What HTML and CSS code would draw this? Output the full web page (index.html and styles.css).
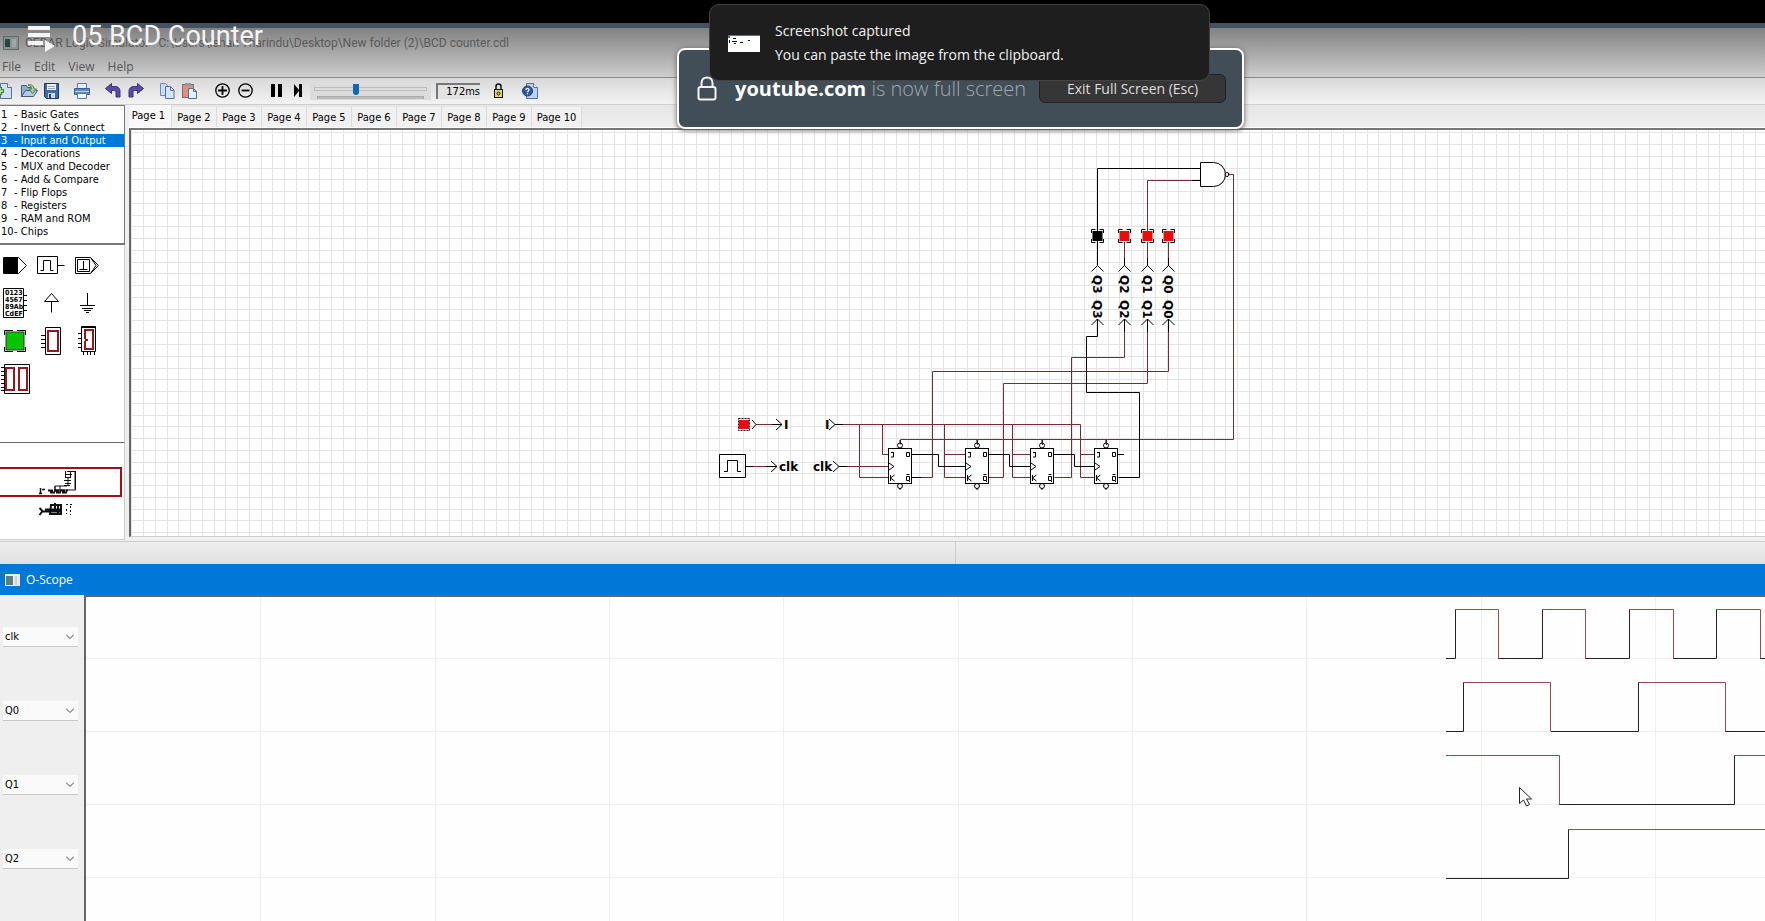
FILE: index.html
```html
<!DOCTYPE html>
<html lang="en">
<head>
<meta charset="utf-8">
<title>05 BCD Counter</title>
<link rel="stylesheet" href="styles.css">
</head>
<body>
<div class="letterbox"></div>
<div class="desktop-strip"></div>

<header class="chrome">
  <div class="title-row">
    <svg class="app-icon" width="16" height="14" viewBox="0 0 16 14"><rect x=".5" y=".5" width="15" height="13" fill="#8b9190" stroke="#646a69"/><rect x="2" y="3" width="5" height="8" fill="#25483f"/><rect x="9" y="3" width="4" height="8" fill="#a3a8a7"/></svg>
    <span>CEDAR Logic Simulator - C:\Users\Ishan Tharindu\Desktop\New folder (2)\BCD counter.cdl</span>
  </div>
  <nav class="menu-row">
    <button>File</button><button>Edit</button><button>View</button><button>Help</button>
  </nav>
</header>

<div class="toolbar">
  <button aria-label="New" class="tool t-new"><svg width="16" height="16" viewBox="0 0 16 16"><path d="M3.500.5h7l4 4v11h-11z" fill="#cfe0f4" stroke="#5b7193"/><path d="M10.500.5v4h4" fill="#fff" stroke="#5b7193"/><path d="M3 4v8M-1 8h8" stroke="#3e7c3a" stroke-width="4"/><path d="M3 5v6M0 8h6" stroke="#a9dc8e" stroke-width="2"/></svg></button>
  <button aria-label="Open" class="tool t-open"><svg width="17" height="16" viewBox="0 0 17 16"><path d="M.5 13.500v-11h5l1 2h5v3" fill="#8fb0cf" stroke="#3f5c86"/><path d="M.5 13.500l4-6h12l-4 6z" fill="#b6cbe4" stroke="#3f5c86"/><path d="M7 2c4-1 6 1 6 4h2.500l-4 4.500L8 6h2.500c0-2-1-3-3.500-4z" fill="#a9cf8b" stroke="#4f7c4c"/></svg></button>
  <button aria-label="Save" class="tool t-save"><svg width="15" height="16" viewBox="0 0 15 16"><path d="M.5.5h14v15h-12l-2-2z" fill="#4068ad" stroke="#1f3766"/><rect x="3" y="1" width="9" height="6" fill="#eef3f9"/><path d="M4 3.500h7M4 5.500h7" stroke="#9ab"/><rect x="4" y="10" width="7" height="5" fill="#cfd8e6"/><rect x="5" y="11" width="2" height="4" fill="#263e6e"/></svg></button>
  <button aria-label="Print" class="tool t-print"><svg width="16" height="16" viewBox="0 0 16 16"><path d="M3.500.5h9v5h-9z" fill="#e6eef8" stroke="#5a78a8"/><path d="M.5 5.500h15v6h-15z" fill="#5f86bf" stroke="#3c5d94"/><path d="M1 8.500h14" stroke="#c3d6ee"/><path d="M3.500 10.500h9v5h-9z" fill="#f2f6fb" stroke="#5a78a8"/></svg></button>
  <button aria-label="Undo" class="tool t-undo"><svg width="16" height="15" viewBox="0 0 16 15"><path d="M.5 5.500L6.500.5v3h3c4 0 5.500 2 5.500 5v5.500h-4V9.500c0-1.500-1-2-2.500-2h-2v3z" fill="#5b4aa8" stroke="#3b2f77"/></svg></button>
  <button aria-label="Redo" class="tool t-redo"><svg width="16" height="15" viewBox="0 0 16 15"><path d="M15.500 5.500L9.500.5v3h-3C2.500 3.500 1 5.500 1 8.500V14h4V9.500c0-1.500 1-2 2.500-2h2v3z" fill="#5b4aa8" stroke="#3b2f77"/></svg></button>
  <button aria-label="Copy" class="tool t-copy"><svg width="15" height="16" viewBox="0 0 15 16"><path d="M.5.500h5l3 3v9h-8z" fill="#c9dcf4" stroke="#7189b3"/><path d="M5.500 3.500h5l3.500 3.500v8.500H5.500z" fill="#d6e6fa" stroke="#566f9f"/><path d="M10.500 3.500v4H14" fill="none" stroke="#566f9f"/></svg></button>
  <button aria-label="Paste" class="tool t-paste"><svg width="16" height="16" viewBox="0 0 16 16"><rect x=".5" y="1.500" width="11" height="13" fill="#dd8f86" stroke="#8a6a66"/><rect x="3" y="0" width="6" height="3" fill="#999"/><path d="M6.500 5.500h5l3 3v7h-8z" fill="#e3eefc" stroke="#566f85"/><path d="M11.500 5.500v3h3" fill="none" stroke="#566f85"/></svg></button>
  <button aria-label="Zoom in" class="tool t-in"><svg width="15" height="15" viewBox="0 0 15 15" fill="none" stroke="#000"><circle cx="7.500" cy="7.500" r="6.700" stroke-width="1.300"/><path d="M7.500 3v9M3 7.500h9" stroke-width="1.800"/></svg></button>
  <button aria-label="Zoom out" class="tool t-out"><svg width="15" height="15" viewBox="0 0 15 15" fill="none" stroke="#000"><circle cx="7.500" cy="7.500" r="6.700" stroke-width="1.300"/><path d="M3.500 7.500h8" stroke-width="1.800"/></svg></button>
  <button aria-label="Pause" class="tool t-pause"><svg width="11" height="13" viewBox="0 0 11 13"><path d="M0 0h4v13H0zM7 0h4v13H7z"/></svg></button>
  <button aria-label="Step" class="tool t-step"><svg width="8" height="13" viewBox="0 0 8 13"><path d="M0 0l5 6V0h3v13H5V7l-5 6z"/></svg></button>
  <div class="speed">
    <input type="range" min="0" max="100" value="36" aria-label="Simulation speed">
    <div class="speed-base"></div>
  </div>
  <input class="readout" type="text" value="172ms" readonly aria-label="Step time">
  <button aria-label="Lock" class="tool t-lock"><svg width="9" height="15" viewBox="0 0 9 15"><path d="M2 7V3.500C2 .2 7 .2 7 3.500V7" fill="none" stroke="#111" stroke-width="1.500"/><rect x=".5" y="6.500" width="8" height="8" fill="#e2d96a" stroke="#111"/><circle cx="4.500" cy="10.500" r="1.500" fill="none" stroke="#111"/></svg></button>
  <button aria-label="Help topics" class="tool t-help"><svg width="16" height="16" viewBox="0 0 16 16"><path d="M4.500.5h7l4 4v11h-11z" fill="#bdd2ee" stroke="#5b7193"/><path d="M11.500.5v4h4" fill="#fff" stroke="#5b7193"/><circle cx="5.500" cy="8" r="5" fill="#2f57a3" stroke="#1f3b78"/><path d="M4 7c0-2.200 3.300-2 3 0-.2 1-1.500 1-1.500 2.300M5.500 10.200v1.300" fill="none" stroke="#fff" stroke-width="1.200"/></svg></button>
</div>

<main class="workspace">
  <aside class="side">
    <ul class="library" role="listbox" aria-label="Gate library">
      <li role="option"><b>1</b>- Basic Gates</li>
      <li role="option"><b>2</b>- Invert &amp; Connect</li>
      <li role="option" aria-selected="true" class="selected"><b>3</b>- Input and Output</li>
      <li role="option"><b>4</b>- Decorations</li>
      <li role="option"><b>5</b>- MUX and Decoder</li>
      <li role="option"><b>6</b>- Add &amp; Compare</li>
      <li role="option"><b>7</b>- Flip Flops</li>
      <li role="option"><b>8</b>- Registers</li>
      <li role="option"><b>9</b>- RAM and ROM</li>
      <li role="option"><b>10</b>- Chips</li>
    </ul>
    <div class="palette">
      <button aria-label="Toggle switch"><svg width="36" height="38"><path d="M3.500 11.500h15l8 8-8 8h-15z" fill="#fff" stroke="#000"/><path d="M4 12h14v15H4z"/></svg></button>
      <button aria-label="Clock"><svg width="36" height="38" fill="none" stroke="#000"><path d="M.5 10.500h20v17H.5zM20.500 19.500h7M3.500 24.500h3v-10h7v10h3"/></svg></button>
      <button aria-label="Pulse"><svg width="36" height="38" fill="none" stroke="#000"><path d="M1.500 11.500h15l8 8-8 8h-15zM3.500 13.500h12v12h-12zM16.500 11.500l5.500 8-5.500 8M9.500 15v8.500M5.500 23.500h8"/></svg></button>
      <button aria-label="Keypad"><svg width="36" height="38"><path d="M3.500 4.500h20v29h-20zM24 11.500h3M24 16.500h3M24 21.500h3M24 26.500h3" fill="none" stroke="#000"/><g class="keypad"><text x="5" y="11">0123</text><text x="5" y="18">4567</text><text x="5" y="25">89Ab</text><text x="5" y="32">CdEF</text></g></svg></button>
      <button aria-label="Power"><svg width="36" height="38" fill="none" stroke="#000"><path d="M14.500 28.500v-11M7.500 17.500l7-8 7 8z"/></svg></button>
      <button aria-label="Ground"><svg width="36" height="38" fill="none" stroke="#000"><path d="M13.500 9v12M6 21.500h15M8 24.500h11M10 26.500h7M12 28.500h3"/></svg></button>
      <button aria-label="LED"><svg width="36" height="38"><rect x="6" y="10" width="18" height="18" fill="#06c400" stroke="#333"/><path d="M4.500 13V8.500H13M17 8.500h8.500V13M4.500 25v4.500H13M17 29.500h8.500V25" fill="none" stroke="#000"/></svg></button>
      <button aria-label="Seven segment display"><svg width="36" height="38" fill="none"><path d="M8.500 5.500h15v27h-15zM4 13.500h4M4 17.500h4M4 21.500h4M4 25.500h4" stroke="#000"/><rect x="11" y="9" width="10" height="20" stroke="#98161c" stroke-width="2"/></svg></button>
      <button aria-label="BCD display"><svg width="36" height="38" fill="none"><path d="M7.500 4.500h14v25h-14zM4 11.500h3M4 16.500h3M4 21.500h3M4 25.500h3M9.500 30v3M13.500 30v3M16.500 30v3M20.500 30v3M7 5.500h15" stroke="#000"/><path d="M11 17V8h8v19h-8v-8M11 18h3" stroke="#98161c" stroke-width="2"/></svg></button>
      <button aria-label="Two digit display"><svg width="36" height="38" fill="none"><path d="M4.500 4.500h25v29h-25zM1 7.500h3M1 11.500h3M1 15.500h3M1 19.500h3M1 23.500h3M1 27.500h3M1 30.500h3" stroke="#000"/><path d="M6 8h8v22H6zM19 8h8v22h-8z" stroke="#98161c" stroke-width="2"/></svg></button>
    </div>
    <div class="minimap">
      <svg width="124" height="96">
        <path d="M-2 25h123v28H-2" fill="none" stroke="#a30f14" stroke-width="2"/>
        <g fill="none" stroke="#111"><path d="M65.500 28v7M67 28.500h8v18M70.500 29v6M75.500 28v19H55v-4h12M64 37.500h7M65 40.500h6M68 34v8M55 43v6M60 43v6M65 31.500h7M65 34.500h6M64 42.500h6"/><path d="M48 47.500h20M50 49.500h17" stroke-width="2" stroke-dasharray="5 1"/><path d="M40.500 45v6M39 50.500h3M42 46.500h3" stroke-width="1.500"/></g>
        <g fill="none" stroke="#111"><path d="M39.500 65l3 3-3 4M42 68.500h20M45 66.500h15" stroke-width="2"/><path d="M51 62h10v9H50zM55 60v9M58 61v9" stroke-width="2"/><path d="M66 61.500h6M70.500 63v9M66.500 66v5" stroke-dasharray="2 2"/></g>
      </svg>
    </div>
  </aside>

  <section class="document">
    <div class="tabs" role="tablist">
      <button role="tab" aria-selected="true" class="tab active">Page 1</button>
      <button role="tab" class="tab">Page 2</button>
      <button role="tab" class="tab">Page 3</button>
      <button role="tab" class="tab">Page 4</button>
      <button role="tab" class="tab">Page 5</button>
      <button role="tab" class="tab">Page 6</button>
      <button role="tab" class="tab">Page 7</button>
      <button role="tab" class="tab">Page 8</button>
      <button role="tab" class="tab">Page 9</button>
      <button role="tab" class="tab last">Page 10</button>
    </div>
    <div class="canvas">
      <svg width="100%" height="100%">
        <defs>
          <pattern id="grid" patternUnits="userSpaceOnUse" x="12" y="14" width="200" height="200">
            <path shape-rendering="crispEdges" stroke="#e4e4e7" d="M.5 0v200M12.500 0v200M24.500 0v200M35.500 0v200M47.500 0v200M59.500 0v200M71.500 0v200M82.500 0v200M94.500 0v200M106.500 0v200M118.500 0v200M129.500 0v200M141.500 0v200M153.500 0v200M165.500 0v200M176.500 0v200M188.500 0v200M0 .5h200M0 12.500h200M0 24.500h200M0 35.500h200M0 47.500h200M0 59.500h200M0 71.500h200M0 82.500h200M0 94.500h200M0 106.500h200M0 118.500h200M0 129.500h200M0 141.500h200M0 153.500h200M0 165.500h200M0 176.500h200M0 188.500h200"/>
          </pattern>
          <g id="flipflop" fill="none" stroke="#000">
            <rect x=".5" y=".5" width="23" height="35" fill="#fff"/>
            <circle cx="12" cy="-2.500" r="2.500"/><circle cx="12" cy="38" r="2.500"/><path d="M12-5v-3M12 40v2M1 15l5 3.500-5 3.500"/>
            <path d="M3 4.500h3M5.500 4v5H3M2.500 27v6M6.500 27l-4 3 4 3M18.500 4.500h3v4h-3zM18.500 28.500h3v4h-3zM18.500 26.500h3M21 33l1 1"/>
          </g>
          <g id="led"><rect x="-4.500" y="-5" width="10" height="10"/><path d="M-5.500-3v-3.500h4M2.500-6.500h4V-3M-5.500 3v3.500h4M2.500 6.500h4V3" fill="none" stroke="#000"/></g>
        </defs>
        <rect width="100%" height="100%" fill="url(#grid)"/>
        <g transform="translate(-131 -130)" fill="none" stroke-width="1">
          <g class="wire-on">
            <path d="M1147.500 236v-55.500H1200M1228 174.500h5.500v265H900.500v5M977.500 445v-5M1042.500 445v-5M1106.500 445v-5"/>
            <path d="M1124.500 242v20M1147.500 242v20M1168.500 242v20"/>
            <path d="M1124.500 325v32.500h-53v120h-17M1147.500 325v58.500h-144v94h-15M1168.500 325v46.500h-236v106h-20"/>
            <path d="M756 424.500h20M842 424.500h238.500v53h14M859.500 424.500v53H888M882.500 424.500v30h6M944.500 424.500v53H965M944.500 454.500H965M1012.500 424.500v53h18M1012.500 454.500h18M1080.500 454.500h14M752 466.500h16M845 466.500h43"/>
          </g>
          <g class="wire-off">
            <path d="M1200 168.500H1097.500V265M1097.500 319v17.500h-11v56h53v85h-21M1118 454.500h6"/>
            <path d="M912 454.500h26.500v12H965M988 454.500h21.500v12h21M1053 454.500h21.500v12h20"/>
            <path d="M1192 180.500h8M745 466.500h8M766 466.500h11M772 424.500h10M835 424.500h8M839 466.500h8M912 477.500h9"/>
            <path d="M1124.500 258v8M1147.500 258v8M1168.500 258v8M1124.500 319v13M1147.500 319v13M1168.500 319v13"/>
            <path d="M1091.500 271.500l6-6 6 6M1118.500 271.500l6-6 6 6M1141.500 271.500l6-6 6 6M1162.500 271.500l6-6 6 6M1091.500 325l6-6 6 6M1118.500 325l6-6 6 6M1141.500 325l6-6 6 6M1162.500 325l6-6 6 6"/>
            <path d="M776 419l6 5.500-6 5.500M829 419l6 5.500-6 5.500M771 461l6 5.500-6 5.500M833 461l6 5.500-6 5.500M752 420l4 4.500-4 4.500"/>
            <path d="M1200.500 162.500h13a12 12 0 0 1 0 24h-13z" fill="#fff"/><circle cx="1227" cy="174.500" r="2"/>
            <path d="M719.500 454.500h26v23h-26zM724 471.500h3.500v-11h10v11h3.500"/>
          </g>
          <use href="#led" x="1097" y="236" fill="#000"/><use href="#led" x="1124" y="236" fill="#e80c0c"/><use href="#led" x="1147" y="236" fill="#e80c0c"/><use href="#led" x="1168" y="236" fill="#e80c0c"/>
          <rect x="739" y="420" width="10" height="9" fill="#e80c0c"/><rect x="738.500" y="418.500" width="11" height="12" stroke="#000" stroke-dasharray="2 1"/>
          <use href="#flipflop" x="888" y="448"/><use href="#flipflop" x="965" y="448"/><use href="#flipflop" x="1030" y="448"/><use href="#flipflop" x="1094" y="448"/>
          <g class="net">
            <text x="784" y="429">I</text><text x="825" y="429">I</text><text x="779" y="471">clk</text><text x="813" y="471">clk</text>
            <text transform="translate(1093 275) rotate(90)">Q3</text><text transform="translate(1120 275) rotate(90)">Q2</text><text transform="translate(1143 275) rotate(90)">Q1</text><text transform="translate(1164 275) rotate(90)">Q0</text>
            <text transform="translate(1093 300) rotate(90)">Q3</text><text transform="translate(1120 300) rotate(90)">Q2</text><text transform="translate(1143 300) rotate(90)">Q1</text><text transform="translate(1164 300) rotate(90)">Q0</text>
          </g>
        </g>
      </svg>
    </div>
  </section>
</main>

<footer class="status"><span></span><span></span></footer>

<section class="scope">
  <h2 class="scope-title"><svg width="15" height="12" viewBox="0 0 15 12"><path d="M0 0h15v12H0z" fill="#e8edf0"/><path d="M1 2h7v9H1z" fill="#5d7f7b"/><path d="M10 2h2v9h-2z" fill="#c7d3da"/></svg>O-Scope</h2>
  <div class="scope-body">
    <div class="channels">
      <label class="channel"><select aria-label="Channel 1"><option>clk</option></select><svg width="8" height="5"><path d="M0 .5l4 4 4-4" fill="none" stroke="#444"/></svg></label>
      <label class="channel"><select aria-label="Channel 2"><option>Q0</option></select><svg width="8" height="5"><path d="M0 .5l4 4 4-4" fill="none" stroke="#444"/></svg></label>
      <label class="channel"><select aria-label="Channel 3"><option>Q1</option></select><svg width="8" height="5"><path d="M0 .5l4 4 4-4" fill="none" stroke="#444"/></svg></label>
      <label class="channel"><select aria-label="Channel 4"><option>Q2</option></select><svg width="8" height="5"><path d="M0 .5l4 4 4-4" fill="none" stroke="#444"/></svg></label>
    </div>
    <div class="traces">
      <svg width="100%" height="100%">
        <g transform="translate(-86 -598)" fill="none">
          <path stroke="#efefef" d="M260.500 598v400M435.500 598v400M609.500 598v400M783.500 598v400M958.500 598v400M1132.500 598v400M1306.500 598v400M1481.500 598v400M1655.500 598v400M86 659.500h1800M86 732.500h1800M86 805.500h1800M86 878.500h1800"/>
          <g class="trace-low">
            <path d="M1446 659.500h9.500v-49M1498 659.500h44.500v-49M1585 659.500h44.500v-49M1673 659.500h43.500v-49M1760 659.500h40"/>
            <path d="M1446 732.500h17.500v-49M1551 732.500h87.500v-49M1725 732.500h80M1559 805.500h175.500v-49M1446 879.500h122.500v-49"/>
          </g>
          <g class="trace-high">
            <path d="M1455 610.500h43.500v49M1542 610.500h43.500v49M1629 610.500h44.500v49M1716 610.500h44.500v49"/>
            <path d="M1463 683.500h87.500v49M1638 683.500h87.500v49M1446 756.500h113.500v49M1734 756.500h80M1568 830.500h240"/>
          </g>
          <path d="M1519.500 788.500v16l4-3.500 3 6 3-1.500-3-5.500h5z" fill="#fff" stroke="#222"/>
        </g>
      </svg>
    </div>
  </div>
</section>

<div class="video-title">
  <svg width="28" height="28" viewBox="0 0 28 28" fill="#f5f5f5"><path d="M0 0h22v4H0zM0 7h22v4H0zM0 15h15v4H0zM17 14l10 6-10 6z"/></svg>
  <span>05 BCD Counter</span>
</div>

<div class="fullscreen-prompt">
  <svg width="20" height="25" viewBox="0 0 20 25" fill="none" stroke="#f4f4f4" stroke-width="2"><rect x="1.500" y="11" width="17" height="12.500" rx="2"/><path d="M4.500 11V7c0-7.500 11-7.500 11 0v4"/></svg>
  <p><strong>youtube.com</strong> is now full screen</p>
  <button>Exit Full Screen (Esc)</button>
</div>

<div class="toast" role="status">
  <svg width="32" height="17" viewBox="0 0 32 17"><path d="M0 0h32v17H0z" fill="#fff"/><path d="M0 0h32v1H0z" fill="#666f74"/><path d="M0 1h2v2H0z" fill="#2b7cd0"/><path d="M5 3h3v1H5zM4 6h5v1H4zM6 8h2v1H6zM12 7h3v1h-3zM20 5h2v1h-2zM1 5h1v3H1z" fill="#111"/></svg>
  <div><strong>Screenshot captured</strong><p>You can paste the image from the clipboard.</p></div>
</div>
</body>
</html>
```
FILE: styles.css
```css
* { box-sizing: border-box; }
body {
  margin: 0;
  height: 100vh;
  overflow: hidden;
  display: flex;
  flex-direction: column;
  position: relative;
  background: #f0f0f0;
  color: #000;
  font-family: "DejaVu Sans Condensed", "Noto Sans", sans-serif;
  font-size: 11px;
}
button, select, input { font: inherit; color: inherit; margin: 0; }
button { background: none; border: 0; padding: 0; }
svg { display: block; }

.letterbox { height: 23px; background: #000; flex: none; }
.desktop-strip { height: 5px; background: #43525f; flex: none; }

.chrome {
  flex: none;
  background: linear-gradient(#828282, #cdcdcd);
  border-bottom: 1px solid #868686;
  font-family: "Open Sans", sans-serif;
  font-size: 12px;
}
.title-row { display: flex; align-items: center; gap: 6px; padding: 0 0 0 3px; height: 29px; color: #5a5a5a; font-family: Roboto, sans-serif; white-space: nowrap; }
.menu-row { display: flex; gap: 13px; padding-left: 2px; height: 20px; color: #555; line-height: 20px; }

.toolbar {
  flex: none;
  display: flex;
  align-items: center;
  height: 27px;
  padding-bottom: 1px;
  background: linear-gradient(#d8d8d8, #f3f3f3);
  border-bottom: 1px solid #d0d0d0;
}
.tool { flex: none; }
.t-new { margin-left: -3px; }
.t-open { margin-left: 8px; }
.t-save { margin-left: 6px; }
.t-print { margin-left: 15px; }
.t-undo { margin-left: 15px; }
.t-redo { margin-left: 7px; }
.t-copy { margin-left: 16px; }
.t-paste { margin-left: 7px; }
.t-in { margin-left: 17px; }
.t-out { margin-left: 8px; }
.t-pause { margin-left: 18px; }
.t-step { margin-left: 12px; }
.t-lock { margin-left: 14px; }
.t-help { margin-left: 19px; }
.speed { margin-left: 8px; width: 121px; height: 18px; padding: 1px 4px 0; background: #dcdcdc; }
.speed input { appearance: none; display: block; width: 100%; height: 12px; background: none; }
.speed input::-webkit-slider-runnable-track { height: 4px; background: #dedede; border: 1px solid #bdbdbd; }
.speed input::-webkit-slider-thumb { appearance: none; width: 6px; height: 11px; margin-top: -4px; background: #1267b4; border-radius: 0 0 3px 3px; }
.speed-base { height: 3px; margin: 1px 3px 0; border: 1px solid #aaa; border-bottom: 0; background: #bbb; }
.readout { margin-left: 5px; width: 44px; height: 16px; padding: 0; border: 0; border-top: 2px solid #777; border-left: 2px solid #777; background: #e2e2e2; text-align: right; }

.workspace { flex: none; display: grid; grid-template-columns: 129px 1fr; }
.side { display: flex; flex-direction: column; padding-right: 4px; }
.library { list-style: none; margin: 0; padding: 2px 0 5px; background: #fff; border: 1px solid #777; border-width: 1px 1px 2px 0; }
.library li { display: flex; height: 13px; line-height: 13px; padding-left: 1px; white-space: nowrap; }
.library b { font-weight: normal; width: 13px; flex: none; }
.library .selected { background: #0078d7; color: #fff; }
.palette { display: grid; grid-template-columns: 37px 37px 37px; grid-auto-rows: 38px; height: 197px; padding-top: 1px; background: #fff; border-right: 1px solid #ccc; }
.keypad { font: bold 7px "DejaVu Sans Condensed", sans-serif; }
.minimap { flex: 1; background: #fff; border-top: 1px solid #666; border-right: 1px solid #ccc; border-bottom: 1px solid #ccc; }

.tabs { display: flex; height: 23px; background: linear-gradient(#e6e6e6, #eee); border-bottom: 1px solid #fff; }
.tab { flex: none; width: 45px; height: 20px; margin-top: 2px; padding-top: 1px; background: #f1f1f1; border-right: 1px solid #dcdcdc; text-align: center; }
.tab.active { width: 43px; height: 22px; margin-top: 0; padding: 0 3px 1px 0; background: #f8f8f8; }
.tab.last { width: 50px; }
.canvas { height: 409px; background: #fff; border-left: 2px solid #666; border-top: 2px solid #777; border-bottom: 1px solid #ccc; }
.wire-on { stroke: #792a33; }
.wire-off { stroke: #000; }
.net { font: bold 12px "DejaVu Sans", sans-serif; fill: #000; }

.status { flex: none; display: grid; grid-template-columns: 955px 1fr; height: 23px; margin-top: 1px; background: linear-gradient(#eee, #e0e0e0); border-top: 1px solid #ccc; }
.status span + span { border-left: 1px solid #ccc; }

.scope { flex: 1; min-height: 0; display: flex; flex-direction: column; }
.scope-title { margin: 0; height: 31px; display: flex; align-items: center; gap: 6px; padding-left: 5px; background: #0078d7; color: #fff; font: 12px "Open Sans", sans-serif; }
.scope-body { flex: 1; display: grid; grid-template-columns: 84px 1fr; min-height: 0; }
.channels { display: flex; flex-direction: column; gap: 54px; padding: 32px 6px 0 3px; background: #efefef; }
.channel { display: flex; align-items: center; height: 20px; background: #fafafa; border-bottom: 1px solid #c8c8c8; padding-right: 4px; }
.channel select { appearance: none; flex: 1; min-width: 0; border: 0; background: none; padding: 0 2px; }
.traces { min-height: 0; background: #fefefe; border-left: 2px solid #666; border-top: 2px solid #666; }
.trace-low { stroke: #222; }
.trace-high { stroke: #a04850; }

.video-title { position: absolute; left: 28px; top: 18px; display: flex; align-items: center; gap: 16px; color: #f5f5f5; font: 27px/36px Roboto, sans-serif; white-space: nowrap; }
.video-title svg { margin-top: 8px; }

.fullscreen-prompt {
  position: absolute; left: 677px; top: 48px; width: 567px; height: 81px;
  display: flex; align-items: center; padding: 0 16px 0 18px;
  background: #414e57; border: 2px solid #fff; border-radius: 8px; box-shadow: 0 1px 5px #555;
  font-family: "Open Sans", sans-serif;
}
.fullscreen-prompt p { margin: 0 0 0 18px; color: #a0a7ab; font-size: 20px; font-weight: 300; white-space: nowrap; }
.fullscreen-prompt strong { color: #fff; font-weight: 700; }
.fullscreen-prompt button { margin-left: auto; width: 187px; height: 29px; background: #363636; border: 1px solid #222; border-radius: 6px; color: #ddd; font-size: 14px; white-space: nowrap; }

.toast {
  position: absolute; left: 709px; top: 4px; width: 501px; height: 77px;
  display: flex; align-items: center; gap: 15px; padding: 1px 0 0 18px;
  background: #1e1e1e; border: 1px solid #444; border-radius: 10px;
  color: #f2f2f2; font: 14px/24px "Open Sans", sans-serif;
}
.toast strong { display: block; font-weight: 400; }
.toast p { margin: 0; }
```
